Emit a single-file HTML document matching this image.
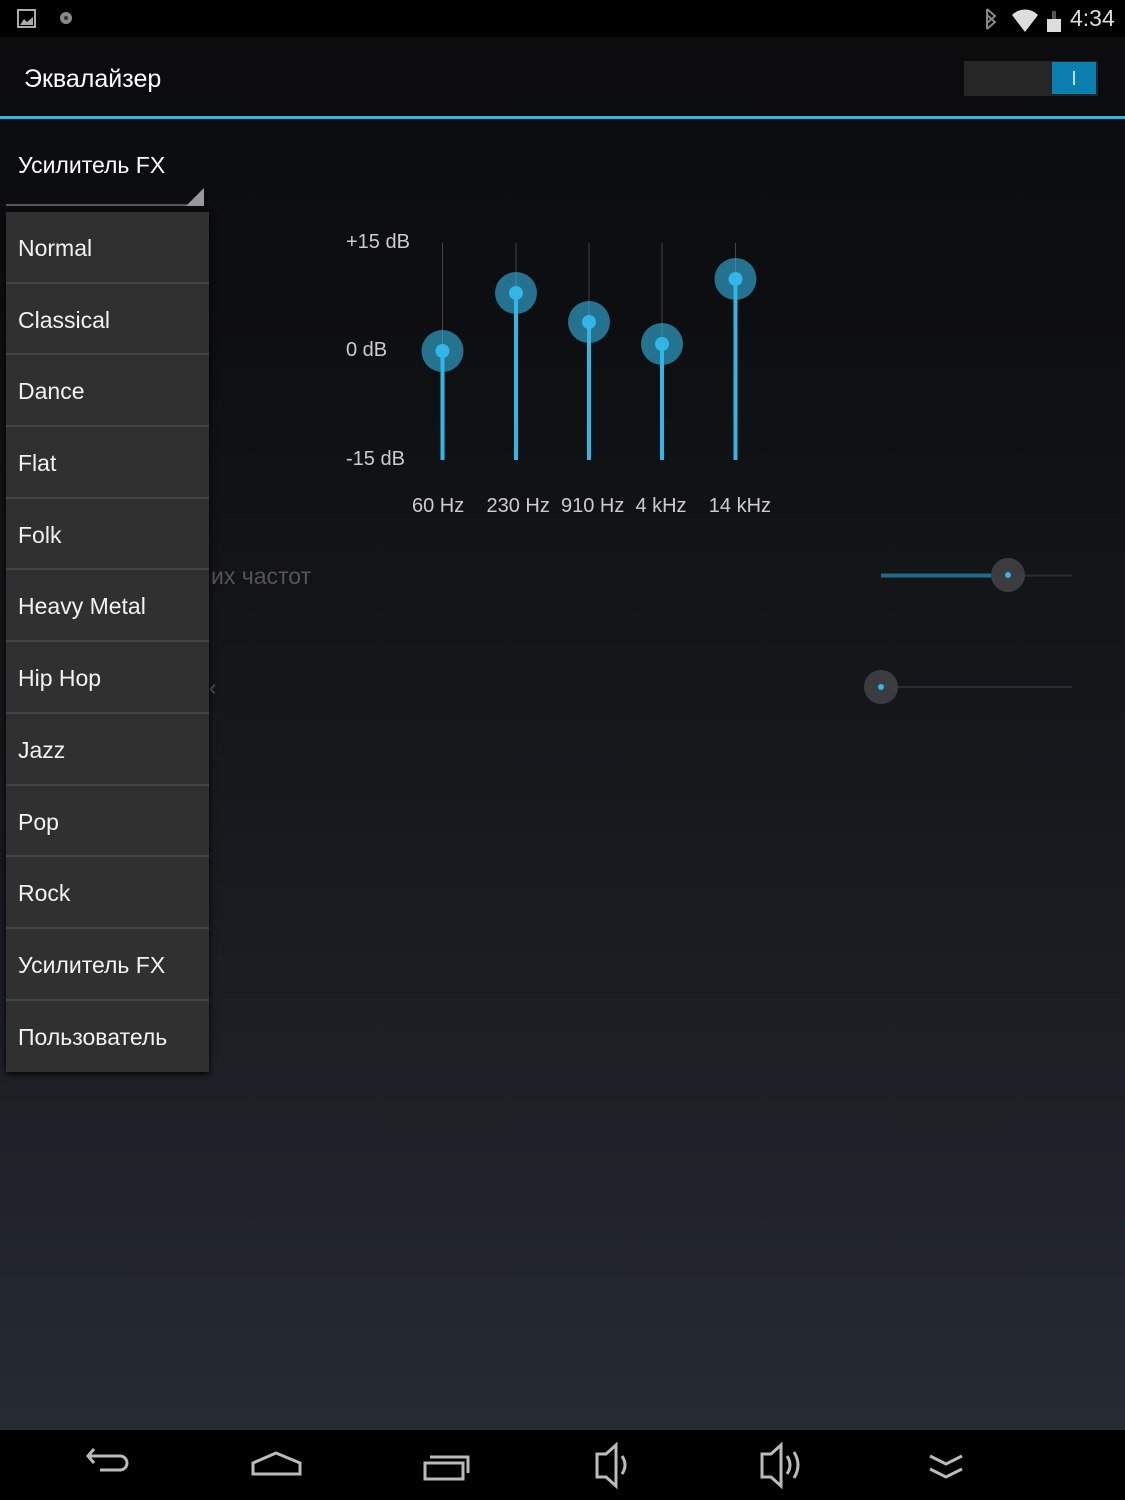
<!DOCTYPE html>
<html><head><meta charset="utf-8"><style>
*{margin:0;padding:0;box-sizing:border-box}
body{width:1125px;height:1500px;overflow:hidden;font-family:"Liberation Sans","DejaVu Sans",sans-serif;color:#eee;background:linear-gradient(#0b0c0e 0px,#0d0e10 300px,#181b1f 900px,#262b32 1428px);position:relative}
.abs{position:absolute}
.menu{left:6px;top:212px;width:203px;background:#303030;box-shadow:0 2px 6px #000}
.menu div{height:71.7px;border-bottom:2px solid #444;font-size:23px;line-height:72px;padding-left:12px;color:#f2f2f2}
.menu div:last-child{border-bottom:none}
</style></head><body>
<div class="abs" style="left:0;top:0;width:1125px;height:37px;background:#000"></div>
<svg class="abs" style="left:16px;top:8px" width="62" height="22"><rect x="2" y="2" width="17" height="17" fill="none" stroke="#aaa" stroke-width="2"/><path d="M4 17 L8 11 L11 14 L17 9 L17 17Z" fill="#aaa"/><circle cx="50" cy="10" r="6" fill="#888"/><circle cx="50" cy="10" r="2" fill="#333"/></svg>
<svg class="abs" style="left:980px;top:5px" width="85" height="28"><path d="M7 4 L15 11 L7 18 M7 4 V24 M7 10 L15 17 L7 24" fill="none" stroke="#888" stroke-width="2"/><path d="M32 10 A18 18 0 0 1 58 10 L45 27Z" fill="#ddd"/><rect x="67" y="14" width="14" height="13" fill="#ddd"/><rect x="72" y="6" width="4" height="8" fill="#555"/></svg>
<div class="abs" style="left:1070px;top:5px;font-size:23px;color:#ddd">4:34</div>
<div class="abs" style="left:24px;top:65px;font-size:25px;color:#fff">Эквалайзер</div>
<div class="abs" style="left:964px;top:61px;width:134px;height:35px;background:#262626"></div>
<div class="abs" style="left:1052px;top:62px;width:44px;height:32px;background:#0a7fb0"></div>
<div class="abs" style="left:1073px;top:71px;width:2px;height:14px;background:#bde"></div>
<div class="abs" style="left:0;top:116px;width:1125px;height:3px;background:#33b5e5"></div>
<div class="abs" style="left:18px;top:152px;font-size:23px;color:#fff">Усилитель FX</div>
<div class="abs" style="left:6px;top:204px;width:198px;height:2px;background:#555"></div>
<svg class="abs" style="left:185px;top:187px" width="20" height="20"><path d="M19 1 V19 H1Z" fill="#999"/></svg>
<div class="abs" style="left:346px;top:231px;font-size:20px;color:#ccc">+15 dB</div>
<div class="abs" style="left:346px;top:339px;font-size:20px;color:#ccc">0 dB</div>
<div class="abs" style="left:346px;top:448px;font-size:20px;color:#ccc">-15 dB</div>
<div class="abs" style="left:412px;top:495px;font-size:20px;color:#ccc;white-space:pre">60 Hz    230 Hz  910 Hz  4 kHz    14 kHz</div>
<svg class="abs" style="left:0;top:0" width="1125" height="800">
<g stroke="#444" stroke-width="1"><line x1="442.5" y1="243" x2="442.5" y2="460"/><line x1="516" y1="243" x2="516" y2="460"/><line x1="589" y1="243" x2="589" y2="460"/><line x1="662" y1="243" x2="662" y2="460"/><line x1="735.5" y1="243" x2="735.5" y2="460"/></g>
<g stroke="#33b5e5" stroke-width="4"><line x1="442.5" y1="351" x2="442.5" y2="460"/><line x1="516" y1="293" x2="516" y2="460"/><line x1="589" y1="322" x2="589" y2="460"/><line x1="662" y1="344" x2="662" y2="460"/><line x1="735.5" y1="279" x2="735.5" y2="460"/></g>
<g fill="#33b5e5" fill-opacity="0.6"><circle cx="442.5" cy="351" r="21"/><circle cx="516" cy="293" r="21"/><circle cx="589" cy="322" r="21"/><circle cx="662" cy="344" r="21"/><circle cx="735.5" cy="279" r="21"/></g>
<g fill="#33b5e5"><circle cx="442.5" cy="351" r="7"/><circle cx="516" cy="293" r="7"/><circle cx="589" cy="322" r="7"/><circle cx="662" cy="344" r="7"/><circle cx="735.5" cy="279" r="7"/></g>
<line x1="881" y1="575.5" x2="1072" y2="575.5" stroke="#2a2d31" stroke-width="2"/>
<line x1="881" y1="575.5" x2="1008" y2="575.5" stroke="#1f6a88" stroke-width="4"/>
<ellipse cx="1008" cy="575" rx="17" ry="17" fill="#3a3c40"/><circle cx="1008" cy="575" r="3" fill="#33b5e5"/>
<line x1="881" y1="687" x2="1072" y2="687" stroke="#2a2d31" stroke-width="2"/>
<ellipse cx="881" cy="687" rx="17" ry="17" fill="#3a3c40"/><circle cx="881" cy="687" r="3" fill="#33b5e5"/>
</svg>
<div class="abs" style="left:211px;top:563px;font-size:23px;color:#555">их частот</div>
<div class="abs" style="left:209px;top:675px;font-size:22px;color:#555">‹</div>
<div class="abs menu">
<div>Normal</div><div>Classical</div><div>Dance</div><div>Flat</div><div>Folk</div><div>Heavy Metal</div><div>Hip Hop</div><div>Jazz</div><div>Pop</div><div>Rock</div><div>Усилитель FX</div><div>Пользователь</div>
</div>
<div class="abs" style="left:0;top:1430px;width:1125px;height:70px;background:#000"></div>
<svg class="abs" style="left:0;top:1436px" width="1125" height="64" fill="none" stroke="#bbb" stroke-width="3">
<path d="M94 27 L88 20 L94 13 M88 20 H120 A7 7 0 0 1 120 34 L100 34"/>
<path d="M253 27 L276 17 L300 27 V38 H253Z"/>
<path d="M425 27 H463 V43 H425Z M430 21 H468 V37"/>
<path d="M597 18 H606 L616 9 V50 L606 41 H597Z M622 20 Q628 29 622 38"/>
<path d="M762 18 H771 L781 9 V50 L771 41 H762Z M787 20 Q793 29 787 38 M794 16 Q802 29 794 42"/>
<path d="M930 20 L946 28 L962 20 M930 33 L946 41 L962 33"/>
</svg>
</body></html>
